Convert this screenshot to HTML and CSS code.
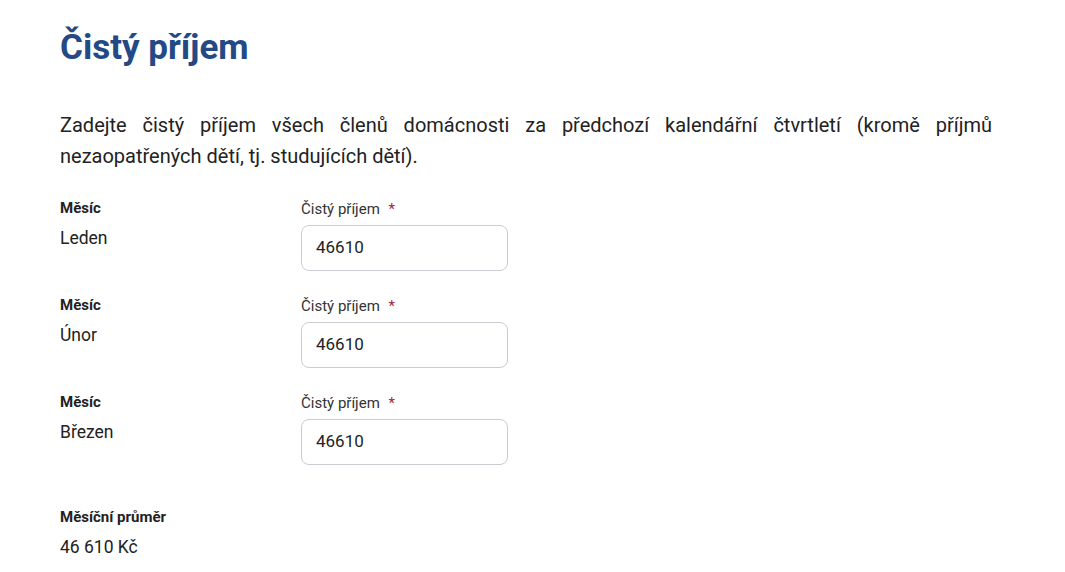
FILE: index.html
```html
<!DOCTYPE html>
<html lang="cs">
<head>
    <meta charset="UTF-8">
    <meta name="viewport" content="width=device-width, initial-scale=1.0">
    <title>Čistý příjem</title>
    <link rel="stylesheet" href="styles.css">
</head>
<body>
    <div class="container">
        <h1>Čistý příjem</h1>
        <p class="intro">Zadejte čistý příjem všech členů domácnosti za předchozí kalendářní čtvrtletí (kromě příjmů nezaopatřených dětí, tj. studujících dětí).</p>

        <!-- měsíce -->
        <div class="row">
            <div class="month">
                <div class="label">Měsíc</div>
                <div class="value">Leden</div>
            </div>
            <div class="field">
                <label for="income-1">Čistý příjem <span class="req">*</span></label>
                <input type="text" id="income-1" value="46610">
            </div>
        </div>

        <div class="row">
            <div class="month">
                <div class="label">Měsíc</div>
                <div class="value">Únor</div>
            </div>
            <div class="field">
                <label for="income-2">Čistý příjem <span class="req">*</span></label>
                <input type="text" id="income-2" value="46610">
            </div>
        </div>

        <div class="row">
            <div class="month">
                <div class="label">Měsíc</div>
                <div class="value">Březen</div>
            </div>
            <div class="field">
                <label for="income-3">Čistý příjem <span class="req">*</span></label>
                <input type="text" id="income-3" value="46610">
            </div>
        </div>

        <div class="average">
            <div class="label">Měsíční průměr</div>
            <div class="value">46 610 Kč</div>
        </div>
    </div>
</body>
</html>
```

FILE: styles.css
```css
body { margin: 0; font-family: Roboto, "Liberation Sans", sans-serif; color: #222; background: #fff; }
.container { width: 932px; padding: 0 0 0 60px; }

h1 {
    margin: 0;
    padding-top: 26px;
    font-size: 35px;
    line-height: 44px;
    font-weight: 700;
    color: #234a85;
}

.intro {
    margin: 40px 0 0 0;
    font-size: 20px;
    line-height: 31px;
    text-align: justify;
}

.row { display: flex; margin-top: 26px; }
.row + .row { margin-top: 24px; }
.month { width: 241px; }

.label { font-size: 15px; font-weight: 700; line-height: 20px; }
.value { font-size: 17.5px; line-height: 26px; margin-top: 7px; }

.field label { display: block; font-size: 15px; line-height: 20px; color: #333; padding-top: 1px; }
.req { color: #a5262e; margin-left: 5px; }

/* pole pro částku */
.field input {
    display: block;
    box-sizing: border-box;
    width: 207px;
    height: 46px;
    margin-top: 6px;
    padding: 0 14px 2px 14px;
    border: 1px solid #c9ccd1;
    border-radius: 8px;
    font-family: inherit;
    font-size: 17px;
    color: #222;
}

.average { margin-top: 42px; }
```
